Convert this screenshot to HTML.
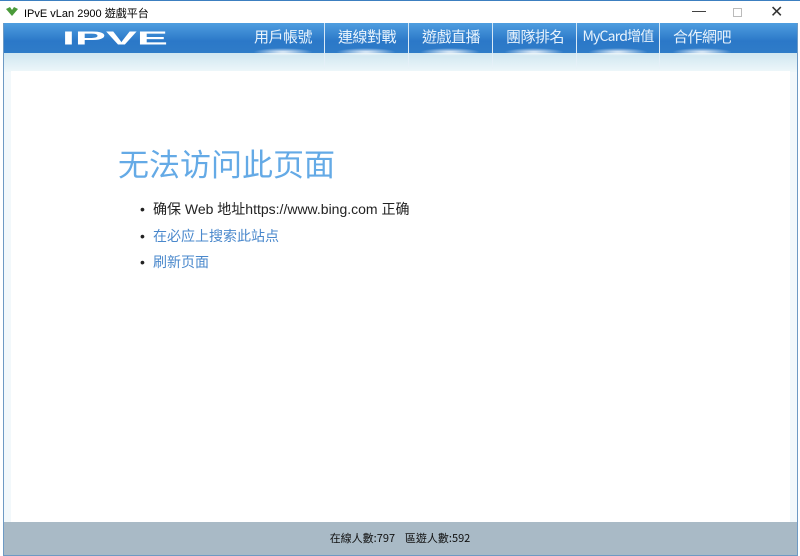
<!DOCTYPE html>
<html><head><meta charset="utf-8"><style>
*{margin:0;padding:0;box-sizing:border-box}
body{width:800px;height:556px;overflow:hidden;background:#fff;font-family:"Liberation Sans","Noto Sans CJK TC",sans-serif;position:relative}
.tb{position:absolute;left:0;top:0;width:800px;height:23px;background:#fff;border-top:1px solid #3c7fc0}
.tb .t{position:absolute;left:24px;top:4px;font-size:11px;color:#000}
.ico{position:absolute;left:6px;top:6px;width:12px;height:10px}
.ctl{position:absolute;top:3px;font-size:14px;color:#333}
.frame{position:absolute;left:3px;top:23px;width:795px;height:533px;background:#f2f8fb;border-left:1px solid #6e9ac4;border-right:1px solid #6e9ac4;border-bottom:1px solid #6e9ac4}
.fbot{position:absolute;left:4px;top:522px;width:793px;height:33px;background:#a9bac6}
.hdr{position:absolute;left:4px;top:23px;width:793px;height:30px;background:linear-gradient(#4f9ee0,#2b78c8 60%,#2f7cc8)}
.lite{position:absolute;left:4px;top:53px;width:793px;height:19px;background:linear-gradient(#cfe6f0,#eef7fa)}
.logo{position:absolute;left:60px;top:27px}
.nav{position:absolute;top:23px;height:49px;font-size:15px;color:#e8f3fc;text-align:center;line-height:27px;font-family:"Noto Sans CJK TC",sans-serif;white-space:nowrap;letter-spacing:-.5px}
.sep{position:absolute;top:23px;width:1px;height:46px;background:linear-gradient(#cfe4f5,#e8f2f8)}
.glow{position:absolute;top:48px;width:60px;height:8px;border-radius:50%;background:radial-gradient(rgba(255,255,255,.9),rgba(255,255,255,0) 70%)}
.content{position:absolute;left:11px;top:71px;width:779px;height:451px;background:#fff}
h1{position:absolute;left:118px;top:140px;font-size:31px;font-weight:normal;color:#64aae6;font-family:"Noto Sans CJK SC",sans-serif}
.li{position:absolute;left:140px;font-size:14px;font-family:"Liberation Sans","Noto Sans CJK SC",sans-serif}
.li b{font-weight:normal;display:inline-block;width:13px;color:#222}
.foot{position:absolute;left:0;width:800px;top:530px;text-align:center;font-size:11px;color:#111;font-family:"Noto Sans CJK TC",sans-serif}
</style></head><body>
<div class="tb"><svg class="ico" viewBox="0 0 12 10"><path d="M0 2 L6 9 L12 2 L8 0 L6 3 L4 0Z" fill="#4a9a3a"/></svg><span class="t">IPvE vLan 2900 遊戲平台</span>
<span class="ctl" style="left:692px;top:1px">—</span><span class="ctl" style="left:733px;width:9px;height:9px;border:1px solid #bbb;top:7px"></span><span class="ctl" style="left:770px;font-size:16px;top:1px">✕</span></div>
<div class="frame"></div><div class="fbot"></div>
<div class="hdr"></div><div class="lite"></div>
<svg class="logo" width="112" height="22" viewBox="0 0 112 22"><text x="2" y="19" font-family="Liberation Sans" font-weight="bold" font-size="23" fill="#fff" textLength="106" lengthAdjust="spacingAndGlyphs" transform="scale(1,0.8) translate(0,3)">IPVE</text></svg>
<div class="sep" style="left:324px"></div><div class="sep" style="left:408px"></div><div class="sep" style="left:492px"></div><div class="sep" style="left:576px"></div><div class="sep" style="left:659px"></div>
<div class="glow" style="left:253px"></div><div class="glow" style="left:336px"></div><div class="glow" style="left:420px"></div><div class="glow" style="left:504px"></div><div class="glow" style="left:588px"></div><div class="glow" style="left:672px"></div>
<div class="nav" style="left:243px;width:80px">用戶帳號</div>
<div class="nav" style="left:326px;width:82px">連線對戰</div>
<div class="nav" style="left:410px;width:82px">遊戲直播</div>
<div class="nav" style="left:494px;width:82px">團隊排名</div>
<div class="nav" style="left:577px;width:82px;font-size:14px;letter-spacing:-.8px">MyCard增值</div>
<div class="nav" style="left:661px;width:82px">合作網吧</div>
<div class="content"></div>
<h1>无法访问此页面</h1>
<div class="li" style="top:199px;color:#222"><b>•</b>确保 Web 地址https://www.bing.com 正确</div>
<div class="li" style="top:226px;color:#4a88cc"><b>•</b>在必应上搜索此站点</div>
<div class="li" style="top:252px;color:#4a88cc"><b>•</b>刷新页面</div>
<div class="foot">在線人數:797&nbsp;&nbsp;&nbsp; 區遊人數:592</div>
</body></html>
